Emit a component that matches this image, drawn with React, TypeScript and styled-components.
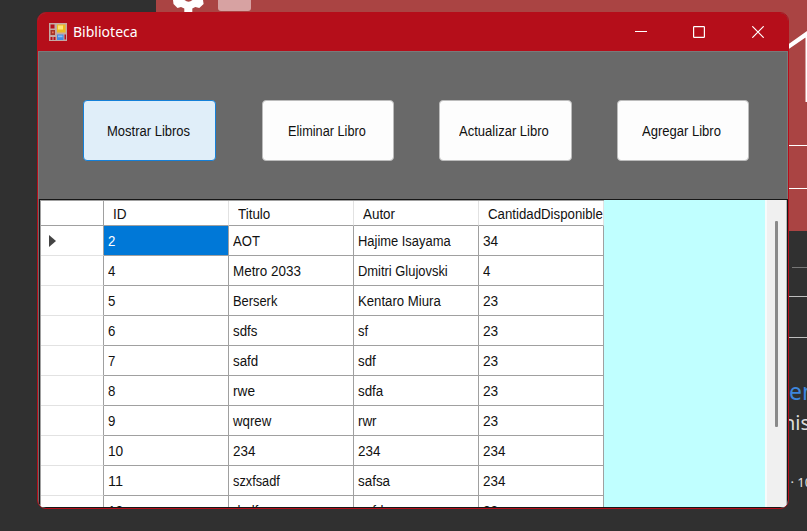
import React, { useLayoutEffect, useRef, useState } from "react";
import styled, { createGlobalStyle } from "styled-components";

const GlobalStyle = createGlobalStyle`
  * { box-sizing: border-box; }
  html, body { margin: 0; overflow: hidden; background: #303030; }
`;

const Desktop = styled.main`
  position: relative;
  width: 807px;
  height: 531px;
  overflow: hidden;
  background: #303030;
  font-family: "Liberation Sans", Arial, sans-serif;
`;

const Banner = styled.div`
  margin-left: 156px;
  height: 231px;
  background: #aa4443;
`;

const Tile = styled.div`
  position: absolute;
  left: 218px;
  top: -10px;
  width: 33px;
  height: 21px;
  border-radius: 3px;
  background: #d7a2a2;
`;

const Drawing = styled.svg<{ $x: number; $y: number }>`
  position: absolute;
  left: ${(p) => p.$x}px;
  top: ${(p) => p.$y}px;
`;

const Rule = styled.div<{ $y: number; $x?: number; $color: string }>`
  position: absolute;
  left: ${(p) => p.$x ?? 788}px;
  right: 0;
  top: ${(p) => p.$y}px;
  height: 1px;
  background: ${(p) => p.$color};
`;

const Fragment = styled.span<{ $x: number; $y: number; $size: number; $color: string }>`
  position: absolute;
  left: ${(p) => p.$x}px;
  top: ${(p) => p.$y}px;
  font: ${(p) => p.$size}px/1.2 "Noto Sans", sans-serif;
  color: ${(p) => p.$color};
  white-space: nowrap;
`;

const Window = styled.section`
  position: absolute;
  left: 37px;
  top: 12px;
  width: 752px;
  height: 497px;
  display: flex;
  flex-direction: column;
  border: 1px solid #b50e1a;
  border-radius: 9px;
  overflow: hidden;
  background: #696969;
`;

const TitleBar = styled.header`
  flex: 0 0 38px;
  display: flex;
  align-items: center;
  padding: 0 1px 0 11px;
  background: #b50e1a;
  color: #fff;
`;

const Title = styled.h1`
  flex: 1;
  margin: -3px 0 0 6px;
  font: 400 15px/20px "Noto Sans", sans-serif;
`;

const CaptionButton = styled.button`
  width: 58.5px;
  height: 38px;
  display: flex;
  align-items: center;
  justify-content: center;
  padding: 0;
  border: 0;
  background: transparent;
  color: #fff;
`;

const Toolbar = styled.div`
  flex: 0 0 148px;
  display: flex;
  gap: 45px;
  padding: 48px 0 0 45px;
  border: 1px solid #7a7a7a;
  border-bottom: 0;
`;

const ActionButton = styled.button<{ $focused?: boolean }>`
  width: 132.5px;
  height: 61px;
  display: flex;
  align-items: center;
  justify-content: center;
  padding: 1px 2px 0 0;
  border: 1px solid ${(p) => (p.$focused ? "#1580d8" : "#bcbcbc")};
  border-radius: 4px;
  background: ${(p) => (p.$focused ? "#e0eef9" : "#fdfdfd")};
  color: #111;
  font: 15.5px/18px "Liberation Sans", Arial, sans-serif;
  ${(p) => p.$focused && "margin: 0 1px 0 -1px;"}
`;

const GridFrame = styled.div`
  flex: 0 0 309px;
  display: flex;
  margin: 0 0 0 1px;
  border: 1px solid #161616;
  background: #c0ffff;
  overflow: hidden;
`;

const Table = styled.div`
  flex: 0 0 564px;
  border-left: 1px solid #a0a0a0;
  background: #fff;
`;

const Row = styled.div<{ $header?: boolean }>`
  display: grid;
  grid-template-columns: 63px repeat(4, 125px);
  height: ${(p) => (p.$header ? 26 : 30)}px;
  ${(p) => p.$header && "border-top: 1px solid #a0a0a0;"}
`;

const Corner = styled.div`
  border-right: 1px solid #a0a0a0;
  border-bottom: 1px solid #a0a0a0;
`;

const RowHeader = styled.div`
  display: flex;
  align-items: center;
  padding-left: 8px;
  border-right: 1px solid #a0a0a0;
  border-bottom: 1px solid #e2e2e2;
`;

const Cell = styled.div<{ $selected?: boolean; $header?: boolean }>`
  display: flex;
  align-items: center;
  padding: ${(p) => (p.$header ? "1px 0 0 8.5px" : "1px 0 0 4px")};
  border-right: 1px solid ${(p) => (p.$header ? "#e2e2e2" : "#a0a0a0")};
  border-bottom: 1px solid #a0a0a0;
  background: ${(p) => (p.$selected ? "#0078d7" : "#fff")};
  color: ${(p) => (p.$selected ? "#fff" : "#111")};
  font-size: 15.5px;
  line-height: 18px;
  white-space: nowrap;
`;

const Scrollbar = styled.div`
  width: 22px;
  margin-left: auto;
  padding: 21px 0 0 8px;
  border-left: 2px solid #f7fbfb;
  border-right: 1px solid #b8b8b8;
  background: #f0f0f0;
`;

const Thumb = styled.div`
  width: 3px;
  height: 206px;
  border-radius: 1px;
  background: #8a8a8a;
`;

const LabelBox = styled.span`
  display: inline-block;
  white-space: nowrap;
`;

const LabelText = styled.span`
  display: inline-block;
  transform-origin: 0 50%;
`;

/* Text condensed horizontally to the given width. */
function Label({ width, children }: { width: number; children: string }) {
  const ref = useRef<HTMLSpanElement>(null);
  const [scale, setScale] = useState(1);
  useLayoutEffect(() => {
    if (ref.current) setScale(width / ref.current.offsetWidth);
  }, [width, children]);
  return (
    <LabelBox style={{ width }}>
      <LabelText ref={ref} style={{ transform: `scaleX(${scale})` }}>
        {children}
      </LabelText>
    </LabelBox>
  );
}

type Entry = [string, number];

const actions: Entry[] = [
  ["Mostrar Libros", 83],
  ["Eliminar Libro", 78],
  ["Actualizar Libro", 90],
  ["Agregar Libro", 79],
];
const columns: Entry[] = [
  ["ID", 14],
  ["Titulo", 32],
  ["Autor", 32],
  ["CantidadDisponible", 114.5],
];
const books: Entry[][] = [
  [["2", 7.7], ["AOT", 27], ["Hajime Isayama", 92.5], ["34", 15]],
  [["4", 7.7], ["Metro 2033", 67.5], ["Dmitri Glujovski", 90], ["4", 7.7]],
  [["5", 7.7], ["Berserk", 44], ["Kentaro Miura", 82.5], ["23", 15]],
  [["6", 7.7], ["sdfs", 24], ["sf", 10], ["23", 15]],
  [["7", 7.7], ["safd", 25], ["sdf", 18], ["23", 15]],
  [["8", 7.7], ["rwe", 22], ["sdfa", 25], ["23", 15]],
  [["9", 7.7], ["wqrew", 38.5], ["rwr", 19], ["23", 15]],
  [["10", 15], ["234", 22.5], ["234", 22.5], ["234", 22.5]],
  [["11", 15], ["szxfsadf", 47], ["safsa", 32], ["234", 22.5]],
  [["12", 15], ["dsdfs", 32], ["safds", 32], ["23", 15]],
];

const AppIcon = () => (
  <svg width="18" height="18" viewBox="0 0 18 18">
    <path fill="#c5aaa5" d="M0 0h18v18H0z" />
    <path fill="#b50e1a" d="M1.5 1.5h4v4h-4zM1.5 14h2v3h-2zM4.5 14h2v3h-2zM15.5 11.5h1.5v5h-1.5z" />
    <path fill="#a63325" d="M1.5 7h4.5v5H1.5z" />
    <path fill="#e8755b" d="M3 8.5h1.7v1.7H3z" />
    <path fill="#edba20" d="M8 1.5h8.5v8H8z" />
    <path fill="#ffe476" d="M9 2.5h5v4H9z" />
    <path fill="#438ae1" d="M8 11.5h6.5V17H8z" />
    <path fill="#8dbdf4" d="M9 12.5h4.5v1.7H9z" />
  </svg>
);

export default function App() {
  return (
    <>
      <GlobalStyle />
      <Desktop>
        <Banner />
        <Drawing $x={173} $y={0} width="31" height="12" viewBox="0 0 31 12">
          <path fill="#fff" d="M0 0h30l.6 4-4.3 4-4-1-3 1.5V12h-8V8.5L8 7 4.5 8 .5 4z" />
          <path fill="#aa4443" d="M11.5 0h8q-4 3.5-8 0z" />
        </Drawing>
        <Tile />
        <Drawing $x={788} $y={30} width="19" height="73" viewBox="0 0 19 73">
          <path fill="#fff" d="M0 14.5 19 1v5.5L0 19.5zM17.5 6H19v66h-1.5z" />
        </Drawing>
        <Rule $y={145} $color="#fff" />
        <Rule $y={188} $color="#fff" />
        <Rule $y={267} $x={792} $color="#777" />
        <Rule $y={296} $color="#bebebe" />
        <Rule $y={337} $color="#bebebe" />
        <Fragment $x={789} $y={378} $size={23} $color="#3d86dd">en</Fragment>
        <Fragment $x={783} $y={411} $size={20} $color="#dcdcdc">his</Fragment>
        <Fragment $x={790.5} $y={475} $size={13} $color="#e0e0e0">· 10</Fragment>
        <Window>
          <TitleBar>
            <AppIcon />
            <Title><Label width={64.5}>Biblioteca</Label></Title>
            <CaptionButton aria-label="Minimizar">
              <svg width="12" height="12"><path d="M0 5.5h12" stroke="currentColor" /></svg>
            </CaptionButton>
            <CaptionButton aria-label="Maximizar">
              <svg width="12" height="12">
                <rect x=".6" y=".6" width="10.8" height="10.8" rx=".6" fill="none" stroke="currentColor" strokeWidth="1.2" />
              </svg>
            </CaptionButton>
            <CaptionButton aria-label="Cerrar">
              <svg width="12" height="12"><path d="m.3.3 11.4 11.4m0-11.4L.3 11.7" stroke="currentColor" strokeWidth="1.2" /></svg>
            </CaptionButton>
          </TitleBar>
          <Toolbar>
            {actions.map(([text, width], i) => (
              <ActionButton key={text} $focused={i === 0}>
                <Label width={width}>{text}</Label>
              </ActionButton>
            ))}
          </Toolbar>
          <GridFrame>
            <Table>
              <Row $header>
                <Corner />
                {columns.map(([text, width]) => (
                  <Cell $header key={text}><Label width={width}>{text}</Label></Cell>
                ))}
              </Row>
              {books.map((book, r) => (
                <Row key={r}>
                  <RowHeader>
                    {r === 0 && <svg width="7" height="12"><path fill="#444" d="M0 0v12l7-6z" /></svg>}
                  </RowHeader>
                  {book.map(([text, width], c) => (
                    <Cell key={c} $selected={r === 0 && c === 0}>
                      <Label width={width}>{text}</Label>
                    </Cell>
                  ))}
                </Row>
              ))}
            </Table>
            <Scrollbar><Thumb /></Scrollbar>
          </GridFrame>
        </Window>
      </Desktop>
    </>
  );
}
